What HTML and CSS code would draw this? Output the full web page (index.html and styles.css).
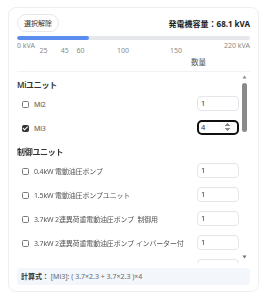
FILE: index.html
```html
<!DOCTYPE html>
<html lang="ja">
  <head>
    <meta charset="UTF-8" />
    <meta name="viewport" content="width=device-width, initial-scale=1.0" />
    <title>発電機容量</title>
    <link rel="stylesheet" href="styles.css">
  </head>
  <body>
    <div class="card">
      <div class="card-head">
        <button class="clear-btn">選択解除</button>
        <div class="capacity">発電機容量：68.1 kVA</div>
      </div>

      <div class="gauge"><div class="gauge-fill" style="width: 31%"></div></div>
      <div class="scale">
        <span>0 kVA</span>
        <span>220 kVA</span>
        <span class="tick" style="left: 11.4%">25</span>
        <span class="tick" style="left: 20.5%">45</span>
        <span class="tick" style="left: 27.3%">60</span>
        <span class="tick" style="left: 45.5%">100</span>
        <span class="tick" style="left: 68.2%">150</span>
      </div>

      <div class="list-head"><span>数量</span></div>

      <div class="list-wrap">
        <div class="list">
          <h3 class="group-title">Miユニット</h3>
          <div class="item">
            <label><input type="checkbox" /> Mi2</label>
            <input class="qty" type="number" value="1" min="1" />
          </div>
          <div class="item">
            <label><input type="checkbox" checked /> Mi3</label>
            <input class="qty" type="number" value="4" min="1" autofocus />
          </div>

          <h3 class="group-title">制御ユニット</h3>
          <div class="item">
            <label><input type="checkbox" /> 0.4kW 電動油圧ポンプ</label>
            <input class="qty" type="number" value="1" min="1" />
          </div>
          <div class="item">
            <label><input type="checkbox" /> 1.5kW 電動油圧ポンプユニット</label>
            <input class="qty" type="number" value="1" min="1" />
          </div>
          <div class="item">
            <label><input type="checkbox" /> 3.7kW 2連異荷重電動油圧ポンプ&nbsp;&nbsp;制御用</label>
            <input class="qty" type="number" value="1" min="1" />
          </div>
          <div class="item">
            <label><input type="checkbox" /> 3.7kW 2連異荷重電動油圧ポンプ インバーター付</label>
            <input class="qty" type="number" value="1" min="1" />
          </div>
          <div class="item">
            <label><input type="checkbox" /> 5.5kW 電動油圧ポンプ インバーター付</label>
            <input class="qty" type="number" value="1" min="1" />
          </div>
          <div class="item">
            <label><input type="checkbox" /> 7.5kW 電動油圧ポンプ インバーター付</label>
            <input class="qty" type="number" value="1" min="1" />
          </div>
          <div class="item">
            <label><input type="checkbox" /> 制御盤</label>
            <input class="qty" type="number" value="1" min="1" />
          </div>

          <h3 class="group-title">周辺機器</h3>
          <div class="item">
            <label><input type="checkbox" /> 照明設備</label>
            <input class="qty" type="number" value="1" min="1" />
          </div>
          <div class="item">
            <label><input type="checkbox" /> 換気ファン</label>
            <input class="qty" type="number" value="1" min="1" />
          </div>
          <div class="item">
            <label><input type="checkbox" /> 溶接機</label>
            <input class="qty" type="number" value="1" min="1" />
          </div>
          <div class="item">
            <label><input type="checkbox" /> コンプレッサー</label>
            <input class="qty" type="number" value="1" min="1" />
          </div>
          <div class="item">
            <label><input type="checkbox" /> 水中ポンプ</label>
            <input class="qty" type="number" value="1" min="1" />
          </div>
        </div>

        <!-- scrollbar drawn by hand, the headless browser hides the real one -->
        <div class="scrollbar">
          <svg class="arrow" width="5" height="4" viewBox="0 0 5 4"><path d="M2.5 0.5 L4.5 3.5 L0.5 3.5 Z" fill="#8a8a8a" /></svg>
          <div class="thumb"></div>
          <svg class="arrow arrow-down" width="5" height="4" viewBox="0 0 5 4"><path d="M0.5 0.5 L4.5 0.5 L2.5 3.5 Z" fill="#6f6f6f" /></svg>
        </div>
      </div>

      <div class="formula">
        <b>計算式：</b> [Mi3]: ( 3.7×2.3 + 3.7×2.3 )×4
      </div>
    </div>
  </body>
</html>
```

FILE: styles.css
```css
* {
  margin: 0;
  padding: 0;
  box-sizing: border-box;
}

body {
  margin: 7px 8px 8px;
  background: white;
  color: #333;
  font-family: "Noto Sans", "Noto Sans CJK JP", sans-serif;
}

.card {
  border: 1px solid #eceef1;
  border-radius: 8px;
  padding: 6px 8px;
}

.card-head {
  display: flex;
  justify-content: space-between;
  align-items: center;
}

.clear-btn {
  width: 42px;
  height: 18px;
  background: white;
  border: 1px solid #e5e7eb;
  border-radius: 999px;
  color: #333;
  font-family: "Noto Sans", "Noto Sans CJK JP", sans-serif;
  font-size: 7px;
}

.capacity {
  font-size: 8px;
  font-weight: 700;
  color: #222;
}

.gauge {
  margin-top: 4px;
  height: 4px;
  background: #e5e7eb;
  border-radius: 2px;
  overflow: hidden;
}

.gauge-fill {
  height: 100%;
  background: #5b8def;
  border-radius: 2px;
}

.scale {
  position: relative;
  height: 13px;
  padding-top: 1px;
  display: flex;
  justify-content: space-between;
  font-size: 7px;
  line-height: 9px;
  color: #8a8a8a;
}

.scale .tick {
  position: absolute;
  top: 6px;
  transform: translateX(-50%);
}

.list-head {
  display: flex;
  justify-content: flex-end;
  padding: 4px 44px 3px 0;
  border-bottom: 1px solid #f1f2f4;
  font-size: 7.5px;
  line-height: 11px;
  color: #555;
}

.list-wrap {
  position: relative;
}

.list {
  height: 191px;
  padding-right: 11px;
  overflow-y: auto;
  scrollbar-width: none;
}

.scrollbar {
  position: absolute;
  top: 0;
  right: 0;
  bottom: 0;
  width: 11px;
  padding: 3px 0 4px;
  display: flex;
  flex-direction: column;
  align-items: center;
}

.scrollbar .thumb {
  width: 5px;
  height: 49px;
  margin-top: 4px;
  background: #8a8a8a;
  border-radius: 3px;
}

.scrollbar .arrow-down {
  margin-top: auto;
}

.group-title {
  padding-top: 7px;
  font-size: 8px;
  font-weight: 600;
  line-height: 12px;
  color: #333;
  letter-spacing: -0.3px;
}

.item {
  height: 24px;
  padding-left: 5px;
  display: flex;
  justify-content: space-between;
  align-items: center;
}

.item label {
  display: flex;
  align-items: center;
  padding-top: 2px;
  font-size: 7px;
  letter-spacing: -0.15px;
  color: #555;
  white-space: nowrap;
}

.item input[type="checkbox"] {
  appearance: none;
  width: 7px;
  height: 7px;
  margin: 0 5px 0 0;
  display: grid;
  place-content: center;
  background: white;
  border: 1px solid #7a7a7a;
  border-radius: 1.5px;
}

.item input[type="checkbox"]:checked {
  background: #333;
  border-color: #333;
}

.item input[type="checkbox"]:checked::after {
  content: "";
  width: 1.5px;
  height: 3.5px;
  margin-top: -1px;
  border: solid white;
  border-width: 0 1px 1px 0;
  transform: rotate(45deg);
}

.qty {
  flex-shrink: 0;
  width: 42px;
  height: 15px;
  padding: 0 3px;
  border: 1px solid #e3e6ea;
  border-radius: 4px;
  font-family: "Noto Sans", sans-serif;
  font-size: 7.5px;
  color: #333;
}

.formula {
  margin-top: 5px;
  height: 17px;
  padding: 0 4px;
  background: #f3f6fa;
  border-radius: 4px;
  font-size: 7px;
  line-height: 17px;
  color: #666;
}

.formula b {
  color: #333;
}
```
